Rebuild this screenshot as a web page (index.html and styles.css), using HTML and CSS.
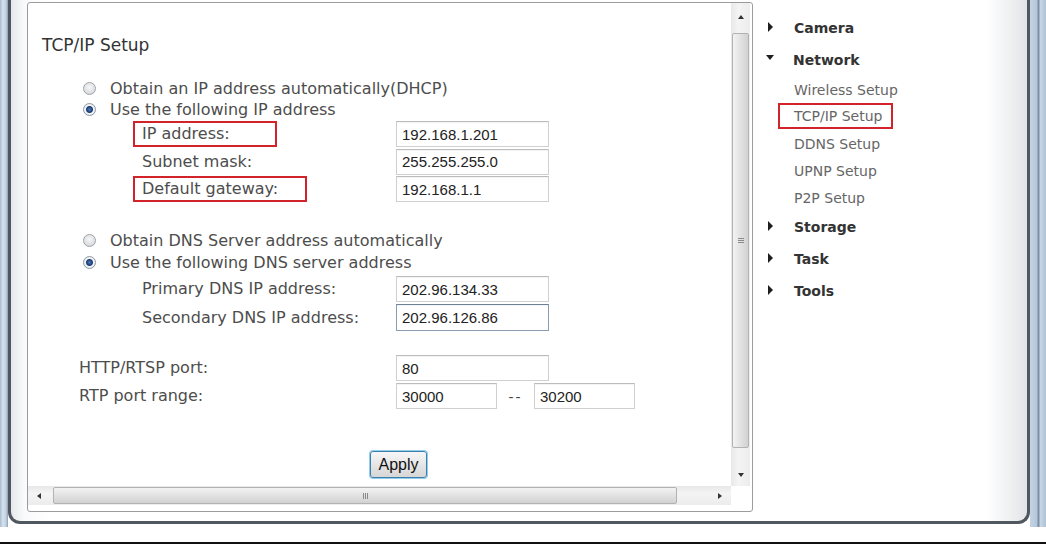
FILE: index.html
```html
<!DOCTYPE html>
<html lang="en">
<head>
    <meta charset="UTF-8">
    <meta name="viewport" content="width=device-width, initial-scale=1.0">
    <title>TCP/IP Setup</title>
    <link rel="stylesheet" href="styles.css">
</head>
<body>

<div class="desktop">
    <div class="panel">
        <div class="frame">
            <div class="page">
                <h2>TCP/IP Setup</h2>

                <div class="choices ip-choices">
                    <div class="choice"><span class="radio"></span>Obtain an IP address automatically(DHCP)</div>
                    <div class="choice"><span class="radio checked"></span>Use the following IP address</div>
                </div>
                <div class="field">
                    <label class="field-label"><span class="mark ip-mark">IP address:</span></label>
                    <input type="text" value="192.168.1.201">
                </div>
                <div class="field">
                    <label class="field-label"><span>Subnet mask:</span></label>
                    <input type="text" value="255.255.255.0">
                </div>
                <div class="field">
                    <label class="field-label"><span class="mark gw-mark">Default gateway:</span></label>
                    <input type="text" value="192.168.1.1">
                </div>

                <div class="choices dns-choices">
                    <div class="choice"><span class="radio"></span>Obtain DNS Server address automatically</div>
                    <div class="choice"><span class="radio checked"></span>Use the following DNS server address</div>
                </div>
                <div class="field">
                    <label class="field-label"><span>Primary DNS IP address:</span></label>
                    <input type="text" value="202.96.134.33">
                </div>
                <div class="field tall">
                    <label class="field-label"><span>Secondary DNS IP address:</span></label>
                    <input type="text" class="focused" value="202.96.126.86">
                </div>

                <div class="field port first-port">
                    <label class="field-label"><span>HTTP/RTSP port:</span></label>
                    <input type="text" value="80">
                </div>
                <div class="field port">
                    <label class="field-label"><span>RTP port range:</span></label>
                    <input type="text" class="short" value="30000">
                    <span class="dash">--</span>
                    <input type="text" class="short" value="30200">
                </div>

                <button type="button" class="apply">Apply</button>
            </div>

            <div class="vscroll">
                <span class="btn"><i class="arrow up"></i></span>
                <span class="thumb"><i class="grip"></i></span>
                <span class="track"></span>
                <span class="btn bottom-btn"><i class="arrow down"></i></span>
            </div>
            <div class="hscroll">
                <span class="btn"><i class="arrow left"></i></span>
                <span class="thumb"><i class="grip"></i></span>
                <span class="track"></span>
                <span class="btn"><i class="arrow right"></i></span>
            </div>
            <div class="corner"></div>
        </div>

        <nav class="menu">
            <a href="#" class="menu-head"><i class="tri"></i>Camera</a>
            <a href="#" class="menu-head"><i class="tri open"></i>Network</a>
            <div class="menu-sub">
                <a href="#">Wireless Setup</a>
                <a href="#" class="current">TCP/IP Setup</a>
                <a href="#">DDNS Setup</a>
                <a href="#">UPNP Setup</a>
                <a href="#">P2P Setup</a>
            </div>
            <a href="#" class="menu-head"><i class="tri"></i>Storage</a>
            <a href="#" class="menu-head"><i class="tri"></i>Task</a>
            <a href="#" class="menu-head"><i class="tri"></i>Tools</a>
        </nav>
    </div>
</div>
<div class="screen-edge"></div>

</body>
</html>
```

FILE: styles.css
```css
body {
    margin: 0;
    padding: 0;
    background-color: #fff;
    font-family: "DejaVu Sans", Verdana, sans-serif;
}

/* window chrome round the panel */
.desktop {
    height: 527px;
    padding: 0 16px 0 8px;
    box-sizing: border-box;
    display: flex;
    align-items: flex-start;
    background:
        linear-gradient(to right, #a9bbcd 0, #d6e2ee 3px, #bfd0e2 6px, #8d9dae 8px) left top / 8px 100% no-repeat,
        linear-gradient(to right, #c4d4e4 0, #b3c7db 7px, #7d8ea0 8px, #7d8ea0 9px, #c9d8e7 10px, #aec2d6 16px) right top / 16px 100% no-repeat,
        #fff;
}

.panel {
    width: 1022px;
    height: 524px;
    box-sizing: border-box;
    display: flex;
    align-items: flex-start;
    padding: 2px 0 9px 16px;
    border: 3px solid #50575f;
    border-top: none;
    border-radius: 0 0 12px 12px;
    background: linear-gradient(to right, #e6e9ec 0, #fafafa 14px, #fff 40px, #fff 96%, #e2e5e8 100%);
}

.screen-edge {
    height: 15px;
    border-bottom: 2px solid #111;
}

/* the embedded settings page */
.frame {
    width: 726px;
    height: 510px;
    box-sizing: border-box;
    flex-shrink: 0;
    border: 1px solid #9c9c9c;
    border-radius: 3px;
    background-color: #fff;
    display: grid;
    grid-template-columns: 703px 19px;
    grid-template-rows: 483px 19px;
}

.page {
    overflow: hidden;
    padding: 32px 0 0 14px;
    font-size: 16px;
    color: #4d4d4d;
}

h2 {
    margin: 0;
    font-size: 17px;
    font-weight: normal;
    line-height: 20px;
    color: #333;
}

.choices {
    padding-left: 41px;
}

.ip-choices {
    margin-top: 23px;
}

.dns-choices {
    margin-top: 27px;
}

.choice {
    display: flex;
    align-items: center;
    height: 21px;
}

.dns-choices .choice {
    height: 22px;
}

.radio {
    width: 13px;
    height: 13px;
    box-sizing: border-box;
    margin-right: 14px;
    border: 1px solid #9ea4aa;
    border-radius: 50%;
    background: radial-gradient(circle at 50% 40%, #f6f6f6 0, #dcdfe2 65%, #c6cbd0 100%);
}

.radio.checked {
    border-color: #8e99a6;
    background: radial-gradient(circle, #4b7cc0 0, #1d3a6e 3px, #f4f6f8 4px, #d9dde1 100%);
}

.field {
    display: flex;
    align-items: center;
    height: 26px;
    margin-top: 1.5px;
    padding-left: 91px;
}

.ip-choices + .field {
    margin-top: 1px;
}

.dns-choices + .field {
    margin-top: 3px;
}

.field.tall {
    height: 27px;
    margin-top: 2px;
}

.field-label {
    width: 263px;
    flex-shrink: 0;
}

.field-label span {
    display: inline-block;
    box-sizing: border-box;
    height: 26px;
    line-height: 22px;
    padding: 0 7px;
    border: 2px solid transparent;
}

.field-label .mark {
    border-color: #d2232a;
}

.ip-mark {
    width: 144px;
}

.gw-mark {
    width: 174px;
}

.field.port {
    padding-left: 28px;
    margin-top: 2px;
}

.field.port .field-label {
    width: 326px;
}

.field.first-port {
    margin-top: 24px;
}

input {
    width: 153px;
    height: 100%;
    box-sizing: border-box;
    margin: 0;
    padding: 0 5px;
    border: 1px solid #d0d0d0;
    border-top-color: #bcbcbc;
    box-shadow: inset 0 1px 1px rgba(0, 0, 0, 0.05);
    background-color: #fff;
    font-family: "Liberation Sans", Arial, sans-serif;
    font-size: 15px;
    color: #222;
}

input.focused {
    border-color: #8a9cb0;
    border-top-color: #6f8196;
}

input.short {
    width: 101px;
}

.dash {
    width: 37px;
    text-align: center;
    font-family: "Liberation Sans", Arial, sans-serif;
    font-size: 15px;
    letter-spacing: 2px;
    color: #444;
}

.apply {
    display: block;
    width: 57px;
    height: 27px;
    margin: 42px 0 0 328px;
    padding: 0;
    border: 1px solid #3b7fae;
    border-radius: 3px;
    box-shadow: 0 0 0 1px #93cde9;
    background: linear-gradient(#f7f7f7, #e6e6e6 50%, #d6d6d6);
    font-family: "Liberation Sans", Arial, sans-serif;
    font-size: 16px;
    color: #111;
}

/* scrollbars */
.vscroll,
.hscroll {
    display: flex;
    background: linear-gradient(to right, #e8e8e8, #f4f4f4 40%, #ececec);
}

.vscroll {
    flex-direction: column;
}

.hscroll {
    background: linear-gradient(#e8e8e8, #f4f4f4 40%, #ececec);
}

.btn {
    display: flex;
    align-items: center;
    justify-content: center;
    flex-shrink: 0;
}

.vscroll .btn {
    height: 28px;
}

.vscroll .bottom-btn {
    height: 23px;
}

.hscroll .btn {
    width: 22px;
}

.track {
    flex: 1;
}

.thumb {
    display: flex;
    align-items: center;
    justify-content: center;
    box-sizing: border-box;
    border: 1px solid #b2b2b2;
    border-radius: 2px;
}

.vscroll .thumb {
    height: 415px;
    margin: 2px 1px 0;
    background: linear-gradient(to right, #f3f3f3, #e2e2e2 50%, #d2d2d2);
}

.hscroll .thumb {
    width: 624px;
    margin: 1px 0 1px 3px;
    background: linear-gradient(#f3f3f3, #e2e2e2 50%, #d2d2d2);
}

.vscroll .grip {
    width: 6px;
    height: 5px;
    background: repeating-linear-gradient(#8a8a8a 0, #8a8a8a 1px, transparent 1px, transparent 2px);
}

.hscroll .grip {
    width: 5px;
    height: 6px;
    background: repeating-linear-gradient(to right, #8a8a8a 0, #8a8a8a 1px, transparent 1px, transparent 2px);
}

.arrow {
    width: 0;
    height: 0;
}

.arrow.up {
    border-left: 3px solid transparent;
    border-right: 3px solid transparent;
    border-bottom: 4px solid #333;
}

.arrow.down {
    border-left: 3px solid transparent;
    border-right: 3px solid transparent;
    border-top: 4px solid #333;
}

.arrow.left {
    border-top: 3px solid transparent;
    border-bottom: 3px solid transparent;
    border-right: 4px solid #333;
}

.arrow.right {
    border-top: 3px solid transparent;
    border-bottom: 3px solid transparent;
    border-left: 4px solid #333;
}

.corner {
    background-color: #fff;
}

/* side menu */
.menu {
    flex: 1;
    padding: 10px 0 0 15px;
}

.menu a {
    display: flex;
    align-items: center;
    text-decoration: none;
}

.menu-head {
    height: 32px;
    font-size: 14px;
    font-weight: bold;
    color: #333;
}

.tri {
    width: 0;
    height: 0;
    margin-right: 21px;
    margin-top: -2px;
    border-top: 5px solid transparent;
    border-bottom: 5px solid transparent;
    border-left: 5px solid #1e1e1e;
}

.tri.open {
    margin-left: -2px;
    margin-right: 19px;
    margin-top: -6px;
    border-left: 4.5px solid transparent;
    border-right: 4.5px solid transparent;
    border-top: 5px solid #1e1e1e;
    border-bottom: none;
}

.menu-sub a {
    height: 27px;
    margin-left: 26px;
    font-size: 14px;
    color: #666;
}

.menu-sub a.current {
    width: 115px;
    height: 26px;
    box-sizing: border-box;
    margin-left: 10px;
    margin-bottom: 1px;
    padding-left: 14px;
    border: 2px solid #d2232a;
}
```
